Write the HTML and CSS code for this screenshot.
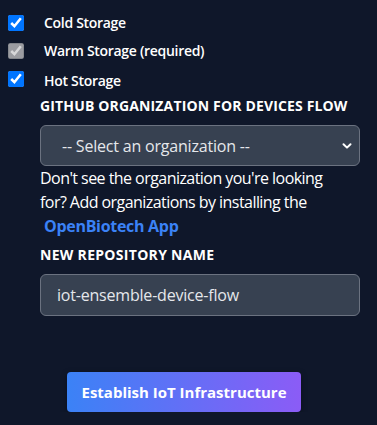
FILE: index.html
```html
<!DOCTYPE html>
<html>
<head>
<meta charset="utf-8">
<title>IoT Infrastructure</title>
<link rel="stylesheet" href="styles.css">
</head>
<body>
	<div class="storage-list">
		<label class="storage-item"><input type="checkbox" checked> <span>Cold Storage</span></label>
		<label class="storage-item"><input type="checkbox" checked disabled> <span>Warm Storage (required)</span></label>
		<label class="storage-item hot"><input type="checkbox" checked> <span>Hot Storage</span></label>
	</div>

	<div class="form-block">
		<div class="field-title">GitHub Organization for Devices Flow</div>
		<div class="select-wrap">
			<select class="field-box org-select">
				<option>-- Select an organization --</option>
			</select>
			<svg class="chevron" width="12" height="12" viewBox="0 0 12 12"><path d="M2.5 4.2 L6 7.6 L9.5 4.2" fill="none" stroke="#fff" stroke-width="2" stroke-linecap="round" stroke-linejoin="round"/></svg>
		</div>
		<p class="help-text">Don't see the organization you're looking for? Add organizations by installing the <a href="#" class="app-link">OpenBiotech App</a></p>

		<div class="field-title repo-title">New Repository Name</div>
		<input class="field-box repo-input" type="text" value="iot-ensemble-device-flow">
	</div>

	<div class="actions">
		<button class="establish-btn">Establish IoT Infrastructure</button>
	</div>
</body>
</html>
```

FILE: styles.css
```css
html, body {
	margin: 0;
	background: #0f172a;
	color: #fff;
	font-family: "Open Sans", "Noto Sans", sans-serif;
}

body {
	padding: 15px 8px 0 8px;
}

.storage-list {
	display: flex;
	flex-direction: column;
	gap: 12px;
}

.storage-item {
	display: flex;
	align-items: center;
	gap: 20px;
	font-size: 14px;
	font-weight: 600;
	height: 16px;
	line-height: 16px;
	letter-spacing: -0.3px;
}

.storage-item input {
	width: 16px;
	height: 16px;
	margin: 0;
}

.storage-item.hot span {
	position: relative;
	top: 2px;
}

.form-block {
	margin: 9px 0 0 32px;
	width: 320px;
}

.field-title {
	font-size: 14px;
	font-weight: 700;
	text-transform: uppercase;
	line-height: 20px;
	letter-spacing: 0.15px;
}

.select-wrap {
	position: relative;
	margin-top: 9px;
}

.field-box {
	display: block;
	box-sizing: border-box;
	width: 320px;
	height: 41px;
	background: #374151;
	border: 1px solid #6b7280;
	border-radius: 6px;
	color: #e5e7eb;
	font-family: inherit;
	font-size: 16px;
	letter-spacing: -0.2px;
	outline: none;
}

.org-select {
	appearance: none;
	-webkit-appearance: none;
	padding: 0 0 0 21px;
}

.chevron {
	position: absolute;
	right: 7px;
	top: 15px;
}

.help-text {
	margin: 0;
	padding-right: 22px;
	font-size: 16px;
	line-height: 24px;
	letter-spacing: -0.55px;
}

.app-link {
	display: inline-block;
	padding-left: 4px;
	color: #3b82f6;
	font-weight: 700;
	letter-spacing: -0.3px;
	text-decoration: none;
}

.repo-title {
	margin-top: 7px;
	letter-spacing: 0.3px;
}

.repo-input {
	margin-top: 9px;
	padding: 0 16px;
	height: 42px;
}

.actions {
	display: flex;
	margin: 56px 0 0 59px;
}

.establish-btn {
	width: 234px;
	height: 40px;
	border: none;
	border-radius: 4px;
	background: linear-gradient(90deg, #3b82f6, #8b5cf6);
	color: #fff;
	font-family: inherit;
	font-size: 15px;
	font-weight: 700;
	box-shadow: 0 2px 6px rgba(0, 0, 0, 0.35);
}
```
